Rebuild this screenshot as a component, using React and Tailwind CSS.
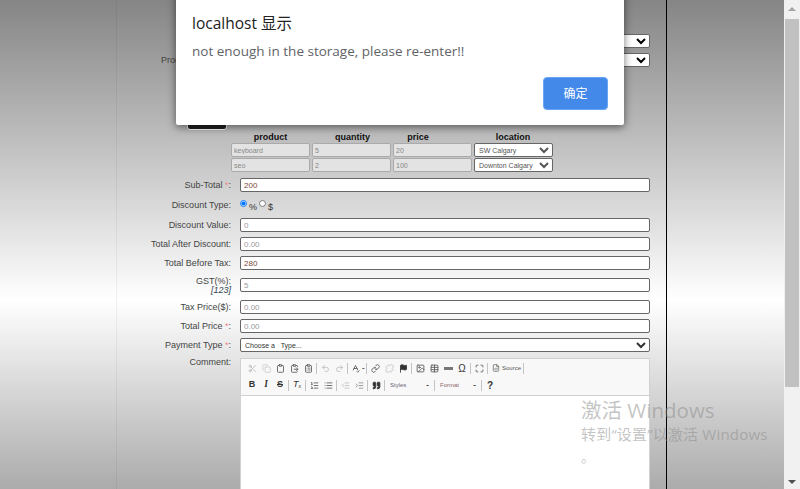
import {
  Scissors, Copy, Clipboard, ClipboardList, ClipboardPaste, Undo2, Redo2, SpellCheck, Link, Unlink, Flag,
  Image, Table, Maximize, FileCode, ListOrdered, List, Outdent, Indent, Quote,
} from 'lucide-react'

const font = 'font-["Liberation_Sans","Noto_Sans_CJK_SC",sans-serif]'
const dialogFont = 'font-["Open_Sans","Noto_Sans_CJK_SC",sans-serif]'

function Sep() {
  return <span className="w-px h-[11px] mx-px bg-[#c4c4c4] shrink-0" />
}

function Tool({ icon: Icon, className = '', fill = 'none' }) {
  return (
    <span className={`w-[14px] h-[14px] flex items-center justify-center shrink-0 ${className}`}>
      <Icon size={9} strokeWidth={2.2} fill={fill} />
    </span>
  )
}

function Glyph({ children, className = '' }) {
  return <span className={`w-[14px] h-[14px] flex items-center justify-center shrink-0 text-[9px] font-bold text-[#333] ${className}`}>{children}</span>
}

function Combo({ label, color, width }) {
  return (
    <span className={`flex items-center justify-between shrink-0 pl-[4px] pr-[4px] text-[6px] ${width} ${color}`}>
      {label}
      <span className="text-[#333] text-[8px] font-bold">-</span>
    </span>
  )
}

function Label({ children, required }) {
  return (
    <label className="w-[114px] shrink-0 text-right text-[9px] leading-[14px] text-[#444]">
      {children}
      {required && <span className="text-[#e88]"> *</span>}
      {required ? ':' : ''}
    </label>
  )
}

function Field({ label, required, value, placeholder }) {
  return (
    <div className="flex gap-[9px] h-[14px] mb-[5px]">
      <Label required={required}>{label}</Label>
      <input
        readOnly
        defaultValue={value}
        placeholder={placeholder}
        className="w-[410px] h-[14px] px-[3px] bg-white border border-[#666] rounded-[2px] text-[8px] leading-[12px] text-[#7a4a3a] placeholder:text-[#999] outline-none"
      />
    </div>
  )
}

function ItemRow({ name, qty, price, location }) {
  const cell = 'w-[79px] h-[14px] px-[2px] bg-[#e3e3e3] border border-[#aaa] rounded-[2px] text-[7px] text-[#888] outline-none'
  return (
    <div className="flex gap-[2px] ml-[114px] mb-px">
      <input readOnly defaultValue={name} className={cell} />
      <input readOnly defaultValue={qty} className={cell} />
      <input readOnly defaultValue={price} className={cell} />
      <select defaultValue={location} className="w-[79px] h-[14px] bg-white border border-[#666] rounded-[2px] text-[7px] text-[#555]">
        <option>{location}</option>
      </select>
    </div>
  )
}

export default function App() {
  return (
    <div className={`relative flex w-[800px] h-[489px] overflow-hidden ${font}`}>
      <main className="flex flex-1 h-full bg-[linear-gradient(#858585_0,#ffffff_300px,#ababab_489px)]">
        <div className="w-[117px] shrink-0 border-r border-black/5" />

        <div className="w-[550px] shrink-0 border-r border-black pt-[34px]">
          <div className="flex justify-end pr-[16px] mb-[5px]">
            <select className="w-[300px] h-[14px] bg-white border border-[#666] rounded-[2px] text-[8px]"><option /></select>
          </div>
          <div className="flex gap-[9px] h-[14px]">
            <Label>Product Location:</Label>
            <select className="w-[410px] h-[14px] bg-white border border-[#666] rounded-[2px] text-[8px]"><option /></select>
          </div>

          <div className="pl-[70px] pt-[32px] h-[63px]">
            <div className="w-[40px] h-[31px] bg-[#222] border border-white rounded-[3px]" />
          </div>

          <div className="flex ml-[114px] h-[13px] text-[9px] leading-[15px] font-bold text-[#111] text-center">
            <span className="w-[79px]">product</span>
            <span className="w-[81px] ml-[2px]">quantity</span>
            <span className="w-[50px]">price</span>
            <span className="w-[140px]">location</span>
          </div>
          <ItemRow name="keyboard" qty="5" price="20" location="SW Calgary" />
          <ItemRow name="seo" qty="2" price="100" location="Downton Calgary" />

          <div className="h-[5px]" />
          <Field label="Sub-Total" required value="200" />

          <div className="flex gap-[9px] h-[16px] mb-[5px]">
            <label className="w-[114px] shrink-0 pt-px text-right text-[9px] leading-[14px] text-[#444]">Discount Type:</label>
            <div className="flex items-start text-[9px] text-[#333]">
              <input type="radio" name="discount" defaultChecked className="w-[7px] h-[7px] m-0 mt-[3px]" />
              <span className="ml-[2px] mt-[5px] leading-[10px]">%</span>
              <input type="radio" name="discount" className="w-[7px] h-[7px] m-0 mt-[3px] ml-[2px]" />
              <span className="ml-[2px] mt-[5px] leading-[10px]">$</span>
            </div>
          </div>

          <Field label="Discount Value:" placeholder="0" />
          <Field label="Total After Discount:" placeholder="0.00" />
          <Field label="Total Before Tax:" value="280" />

          <div className="flex gap-[9px] h-[20px] mb-[5px]">
            <div className="w-[114px] shrink-0 text-right text-[9px] leading-[9px] text-[#444] pt-[2px]">
              GST(%):
              <div className="italic text-[#345]">[123]</div>
            </div>
            <input readOnly placeholder="5" className="w-[410px] h-[14px] mt-[3px] px-[3px] bg-white border border-[#666] rounded-[2px] text-[8px] placeholder:text-[#999] outline-none" />
          </div>

          <Field label="Tax Price($):" placeholder="0.00" />
          <Field label="Total Price" required placeholder="0.00" />

          <div className="flex gap-[9px] h-[14px] mb-[6px]">
            <Label required>Payment Type</Label>
            <select className="w-[410px] h-[14px] bg-white border border-[#666] rounded-[2px] text-[7px] text-[#333]">
              <option>Choose a &nbsp; Type...</option>
            </select>
          </div>

          <div className="flex gap-[9px]">
            <label className="w-[114px] shrink-0 text-right text-[9px] leading-[8px] text-[#444]">Comment:</label>
            <div className="w-[410px] h-[200px] bg-white border border-[#d1d1d1]">
              <div className="h-[37px] bg-[#f8f8f8] border-b border-[#d1d1d1] pl-[4px] pt-[2px] text-[#555]">
                <div className="flex items-center h-[14px]">
                  <Tool icon={Scissors} className="text-[#bbb]" />
                  <Tool icon={Copy} className="text-[#ccc]" />
                  <Tool icon={Clipboard} />
                  <Tool icon={ClipboardPaste} />
                  <Tool icon={ClipboardList} />
                  <Sep />
                  <Tool icon={Undo2} className="text-[#bbb]" />
                  <Tool icon={Redo2} className="text-[#bbb]" />
                  <Sep />
                  <span className="-ml-px"><Tool icon={SpellCheck} /></span>
                  <span className="w-[3px] text-[8px] font-bold leading-none">-</span>
                  <Sep />
                  <Tool icon={Link} />
                  <Tool icon={Unlink} className="text-[#bbb]" />
                  <Tool icon={Flag} className="text-[#333]" fill="currentColor" />
                  <Sep />
                  <Tool icon={Image} />
                  <Tool icon={Table} />
                  <Glyph><span className="block w-[9px] h-[3px] bg-[#777]" /></Glyph>
                  <Glyph className="font-normal text-[10px]">Ω</Glyph>
                  <Sep />
                  <Tool icon={Maximize} />
                  <Sep />
                  <span className="flex items-center gap-[2px] w-[33px] pl-[3px] text-[6px] text-[#555]">
                    <FileCode size={8} strokeWidth={2} className="shrink-0" />
                    Source
                  </span>
                  <Sep />
                </div>
                <div className="flex items-center h-[14px] mt-[3px]">
                  <Glyph>B</Glyph>
                  <Glyph className="italic font-serif">I</Glyph>
                  <Glyph className="line-through">S</Glyph>
                  <Sep />
                  <Glyph className="italic font-normal">T<sub className="text-[5px]">x</sub></Glyph>
                  <Sep />
                  <Tool icon={ListOrdered} />
                  <Tool icon={List} />
                  <Sep />
                  <Tool icon={Outdent} className="text-[#bbb]" />
                  <Tool icon={Indent} className="text-[#888]" />
                  <Sep />
                  <Tool icon={Quote} className="text-[#333]" fill="currentColor" />
                  <Sep />
                  <Combo label="Styles" color="text-[#667]" width="w-[47px]" />
                  <Sep />
                  <Combo label="Format" color="text-[#866]" width="w-[44px]" />
                  <Sep />
                  <Glyph className="text-[10px]">?</Glyph>
                </div>
              </div>
            </div>
          </div>
        </div>
      </main>

      <aside className="flex flex-col items-center justify-between w-[16px] h-full bg-[#f1f1f1] pt-[7px] pb-[5px]">
        <span className="w-0 h-0 border-x-[4px] border-x-transparent border-b-[4px] border-b-[#a3a3a3]" />
        <span className="w-[14px] h-[368px] bg-[#c1c1c1] mb-[86px]" />
        <span className="w-0 h-0 border-x-[4px] border-x-transparent border-t-[4px] border-t-[#505050]" />
      </aside>

      {/* alert dialog */}
      <div className={`absolute left-[176px] top-[-20px] w-[448px] h-[145px] bg-white rounded-b-[2px] shadow-[0_2px_8px_rgba(0,0,0,0.55)] pl-[16px] pr-[16px] ${dialogFont}`}>
        <div className="pt-[32px] h-[58px] text-[15.5px] leading-[22px] text-[#222]">localhost 显示</div>
        <div className="mt-[3px] text-[13.5px] leading-[20px] text-[#5f6368]">not enough in the storage, please re-enter!!</div>
        <div className="flex justify-end mt-[16px]">
          <button className="w-[65px] h-[33px] bg-[#4289ea] border border-[#6aa5f5] rounded-[4px] text-[12px] text-white">确定</button>
        </div>
      </div>

      {/* windows watermark */}
      <div className={`absolute left-[581px] top-[397px] text-[#8a8a8a]/50 pointer-events-none whitespace-nowrap ${dialogFont}`}>
        <div className="text-[20.5px] leading-[26px]">激活 Windows</div>
        <div className="text-[15px] leading-[22px] tracking-[0.2px]">转到“设置”以激活 Windows</div>
        <div className="text-[14px] leading-[20px] mt-[2px]">。</div>
      </div>
    </div>
  )
}
